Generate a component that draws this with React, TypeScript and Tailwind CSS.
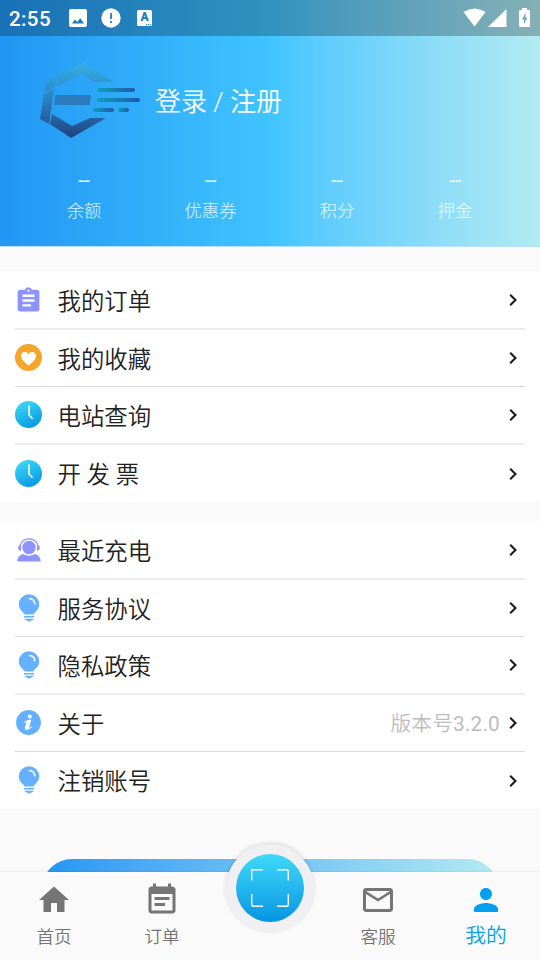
import React from 'react';

function Clipboard() {
  return (
    <svg viewBox="0 0 24 24" className="mt-px h-[29px] w-[29px] flex-none" fill="#8c93fc">
      <path d="M19 3h-4.18C14.4 1.84 13.3 1 12 1s-2.400.84-2.820 2H5c-1.100 0-2 .9-2 2v14c0 1.100.9 2 2 2h14c1.100 0 2-.9 2-2V5c0-1.100-.9-2-2-2zm-7 0c.55 0 1 .45 1 1s-.45 1-1 1-1-.45-1-1 .45-1 1-1zm2 14H7v-2h7v2zm3-4H7v-2h10v2zm0-4H7V7h10v2z" />
    </svg>
  );
}

function Heart() {
  return (
    <svg viewBox="0 0 27 27" className="-mt-px h-[27px] w-[27px]">
      <circle cx="13.5" cy="13.5" r="13.5" fill="#f5a42c" />
      <path d="M13.500 21.500C9 18 6 15.200 6 11.800C6 9.500 7.700 8 9.800 8C11.400 8 12.800 8.900 13.500 10.300C14.200 8.900 15.600 8 17.200 8C19.300 8 21 9.500 21 11.800C21 15.200 18 18 13.500 21.500Z" fill="#fff" />
    </svg>
  );
}

function Clock() {
  return (
    <svg viewBox="0 0 27 27" className="-mt-px h-[27px] w-[27px]">
      <defs>
        <linearGradient id="clockFill" x1="0.25" y1="0" x2="0.7" y2="1">
          <stop offset="0" stopColor="#3dd9f8" />
          <stop offset="1" stopColor="#0697e2" />
        </linearGradient>
      </defs>
      <circle cx="13.5" cy="13.5" r="13.5" fill="url(#clockFill)" />
      <path d="M14 4.500V14L17.600 17.800" fill="none" stroke="#fff" strokeWidth="1.600" />
    </svg>
  );
}

function Headset() {
  return (
    <svg viewBox="0 0 24 25" className="h-[25px] w-6" fill="#8c93fc">
      <circle cx="12" cy="10.500" r="6.700" />
      <path d="M3 9.500C4 4.500 7.300 1.800 12 1.800S20 4.500 21 9.500" fill="none" stroke="#8c93fc" strokeWidth="1.200" />
      <path d="M4 7.500C.3 8.500.3 13.300 4 14ZM20 7.500C23.700 8.500 23.700 13.300 20 14Z" />
      <path d="M.3 24.500C.4 20 3.200 17.600 6.400 17C9.500 19.200 14.500 19.200 17.600 17C20.800 17.600 23.600 20 23.700 24.500Z" />
    </svg>
  );
}

function Bulb() {
  return (
    <svg viewBox="0 0 22 28" className="-mt-px h-7 w-[22px]" fill="#66b1ff">
      <path d="M11 .3A10.200 10.200 0 0 0 .8 10.500C.8 14.800 4 17.300 5.600 19Q6.200 20.500 7.400 20.500H14.600Q15.800 20.500 16.400 19C18 17.300 21.200 14.800 21.200 10.500A10.200 10.200 0 0 0 11 .3Z" />
      <path d="M11.500 4.500Q16.300 4.800 16.800 9.800" fill="none" stroke="#fff" strokeWidth="1.500" strokeLinecap="round" />
      <path d="M6 22H16V23.500H6ZM6 24.700H16Q14.800 26.200 13.500 26.300Q12.500 27.500 11 27.500T8.500 26.300Q7 26 6 24.700Z" />
    </svg>
  );
}

function Info() {
  return (
    <svg viewBox="0 0 25 25" className="-mt-px h-[25px] w-[25px]">
      <circle cx="12.500" cy="12.500" r="12.400" fill="#66b1ff" />
      <circle cx="13.800" cy="6.500" r="1.900" fill="#fff" />
      <path d="M8.500 11.600Q11.500 10.300 13.300 9.800H15.300L13 17.400Q13 18.200 15.300 16.200L15.900 16.900Q12.500 20.500 9.900 20Q8.400 19.500 8.900 17.700L10.400 12.500L8.300 12.600Z" fill="#fff" />
    </svg>
  );
}

function Chevron() {
  return (
    <svg viewBox="0 0 12 16" className="h-4 w-3" fill="none" stroke="#1c1c1c" strokeWidth="2.100">
      <path d="M3.200 2.700L8.500 8L3.200 13.300" />
    </svg>
  );
}

function Logo() {
  return (
    <svg viewBox="0 0 100 78" className="h-[78px] w-[100px]">
      <defs>
        <linearGradient id="frame" gradientUnits="userSpaceOnUse" x1="0" y1="0" x2="0" y2="77">
          <stop offset="0" stopColor="#35b0e6" />
          <stop offset="0.5" stopColor="#2b7fbe" />
          <stop offset="1" stopColor="#20417f" />
        </linearGradient>
        <linearGradient id="speed">
          <stop offset="0" stopColor="#0ba3b5" />
          <stop offset="1" stopColor="#2455ad" />
        </linearGradient>
      </defs>
      <g fill="url(#frame)">
        <path d="M19 12L44 0L73 20H54L41 12L17 24Z" />
        <path d="M6 21L17 13L14 25.500L4 30.500Z" />
        <path d="M4 32L14 27L9 62L0 57Z" />
        <path d="M12 52L32 64L50 56H66L31 76L10 62Z" />
      </g>
      <path d="M15.500 33H51L49.500 43H14Z" fill="#2b7cbf" />
      <g fill="url(#speed)">
        <rect x="57" y="26" width="38" height="4" rx="2" />
        <rect x="57" y="36" width="43" height="4" rx="2" />
        <rect x="53" y="46" width="21" height="4" rx="2" />
        <rect x="78" y="46" width="11" height="4" rx="2" />
      </g>
    </svg>
  );
}

type RowProps = {
  icon: React.ReactNode;
  label: string;
  note?: React.ReactNode;
  line: 'thick' | 'thin' | 'none';
  first?: boolean;
  h?: string;
};

const rowLine = {
  thick: 'border-b-2 border-[#ececec]',
  thin: 'border-b border-[#dadada]',
  none: '',
};

function Row({ icon, label, note, line, first = false, h = 'h-[57px]' }: RowProps) {
  return (
    <div className={`flex items-center ${h} ${rowLine[line]}`}>
      <div className="flex w-[27px] items-center justify-center">{icon}</div>
      <div
        className={`ml-[15.500px] flex-1 text-[23.400px] leading-[34px] whitespace-pre text-[#212121] ${first ? 'pt-[5px]' : 'pt-[3px]'}`}
      >
        {label}
      </div>
      {note && <div className="mr-[7px] pt-[2px] text-[20.800px] leading-[30px] text-[#bdbdbd]">{note}</div>}
      <div className="mr-1.5">
        <Chevron />
      </div>
    </div>
  );
}

function Stat({ label, className }: { label: string; className: string }) {
  return (
    <div className={`flex flex-col items-center ${className}`}>
      <div className="text-[21px] leading-6 font-normal text-white">--</div>
      <div className="mt-1.5 text-[17.300px] leading-[26px] whitespace-nowrap text-white/70">{label}</div>
    </div>
  );
}

function Tab({ label, path, active = false }: { label: string; path: string; active?: boolean }) {
  return (
    <div className={`flex w-[108px] flex-col items-center ${active ? 'text-[#03a0f0]' : 'text-[#757575]'}`}>
      <svg viewBox="0 0 24 24" className="mt-[10px] h-9 w-9" fill="currentColor">
        <path d={path} />
      </svg>
      <div className={active ? 'mt-[5px] text-[20.800px] leading-[26px]' : 'mt-[6px] text-[17.600px] leading-[26px]'}>
        {label}
      </div>
    </div>
  );
}

function StatusBar() {
  return (
    <div className="flex h-9 items-center bg-black/25 text-white">
      <div className="ml-[9px] w-[60px] pt-[2px] text-[20.500px] leading-6 font-medium tracking-[0.400px]">2:55</div>
      <svg viewBox="0 0 18 18" className="h-[18px] w-[18px]" fill="#fff">
        <path fillRule="evenodd" d="M2 0H16Q18 0 18 2V16Q18 18 16 18H2Q0 18 0 16V2Q0 0 2 0ZM3 14.500H15L11.200 9.200L8.200 13L6 10.500Z" />
      </svg>
      <svg viewBox="0 0 20 20" className="ml-[14px] h-5 w-5">
        <circle cx="10" cy="10" r="9.700" fill="#fff" />
        <path d="M9 5H11V11H9ZM9 13H11V15H9Z" fill="#3788bd" />
      </svg>
      <div className="ml-[16px] flex h-4 w-[15px] flex-col items-center rounded-[1.500px] bg-white text-[12px] leading-[13px] font-black text-[#267db7]">
        <span className="pt-px">A</span>
        <div className="ml-[7px] flex gap-px">
          <i className="h-px w-px bg-[#267db7]" />
          <i className="h-px w-px bg-[#267db7]" />
          <i className="h-px w-px bg-[#267db7]" />
        </div>
      </div>
      <svg viewBox="0 0 24 20" className="ml-auto h-5 w-6" fill="#fff">
        <path d="M.5 4Q11.500-3 22.500 4L11.500 18.500Z" />
      </svg>
      <svg viewBox="0 0 19 19" className="ml-[1px] h-[19px] w-[19px]" fill="#fff">
        <path d="M18.500 0V18H0Z" />
      </svg>
      <svg viewBox="0 0 11 20" className="mr-[10px] ml-[12px] h-5 w-[11px]">
        <path d="M3 0H8V2H10Q11 2 11 3V18Q11 19 10 19H1Q0 19 0 18V3Q0 2 1 2H3Z" fill="#fff" />
        <path d="M6.500 4.500L3 11.500H5V16.500L8.300 9.500H6.500Z" fill="#7caab4" />
      </svg>
    </div>
  );
}

export default function App() {
  return (
    <div className="relative flex h-[960px] w-[540px] flex-col overflow-hidden bg-[#fafafa] font-[Roboto,'Noto_Sans_CJK_SC',sans-serif] font-[350]">
      <header className="flex h-[246px] flex-none flex-col bg-linear-to-r from-[#2196f3] via-[#40c4ff] to-[#b2ebf2] shadow-[0_1px_0_#b9e2fa]">
        <StatusBar />
        <div className="mt-[25px] flex h-[80px] items-center pl-10">
          <Logo />
          <div className="ml-[15px] pt-[2px] text-[26px] leading-9 text-white">登录 / 注册</div>
        </div>
        <div className="mt-[27px] flex pl-[66px]">
          <Stat label="余额" className="w-9" />
          <Stat label="优惠券" className="ml-[82px] w-[53px]" />
          <Stat label="积分" className="ml-[82px] w-9" />
          <Stat label="押金" className="ml-[82px] w-9" />
        </div>
      </header>

      <section className="mt-[25px] flex-none bg-white px-[15px]">
        <Row icon={<Clipboard />} label="我的订单" line="thick" h="h-[59px]" first />
        <Row icon={<Heart />} label="我的收藏" line="thin" />
        <Row icon={<Clock />} label="电站查询" line="thick" h="h-[58px]" />
        <Row icon={<Clock />} label="开 发 票" line="none" />
      </section>

      <section className="mt-[19px] flex-none bg-white px-[15px]">
        <Row icon={<Headset />} label="最近充电" line="thick" h="h-[59px]" first />
        <Row icon={<Bulb />} label="服务协议" line="thin" />
        <Row icon={<Bulb />} label="隐私政策" line="thick" h="h-[58px]" />
        <Row
          icon={<Info />}
          label="关于"
          note={
            <>
              版本号<span className="font-normal tracking-[0.200px]">3.2.0</span>
            </>
          }
          line="thin"
        />
        <Row icon={<Bulb />} label="注销账号" line="none" />
      </section>

      <div className="mx-[42px] mt-[50px] h-[13px] flex-none overflow-hidden">
        <div className="h-[60px] rounded-[30px] bg-linear-to-r from-[#2196f3] to-[#b2ebf2]" />
      </div>
      <nav className="z-10 flex h-[88px] flex-none bg-[#fafafa] shadow-[0_-1px_2px_rgba(0,0,0,0.060)]">
        <Tab label="首页" path="M10 20v-6h4v6h5v-8h3L12 3 2 12h3v8z" />
        <Tab
          label="订单"
          path="M17 10H7v2h10v-2zm2-7h-1V1h-2v2H8V1H6v2H5c-1.110 0-1.990.9-1.990 2L3 19c0 1.100.89 2 2 2h14c1.100 0 2-.9 2-2V5c0-1.100-.9-2-2-2zm0 16H5V8h14v11zm-5-5H7v2h7v-2z"
        />
        <div className="w-[108px]" />
        <Tab
          label="客服"
          path="M22 6c0-1.100-.9-2-2-2H4c-1.100 0-2 .9-2 2v12c0 1.100.9 2 2 2h16c1.100 0 2-.9 2-2V6zm-2 0l-8 5-8-5h16zm0 12H4V8l8 5 8-5v10z"
        />
        <Tab
          label="我的"
          active
          path="M12 12c2.210 0 4-1.790 4-4s-1.790-4-4-4-4 1.790-4 4 1.790 4 4 4zm0 2c-2.670 0-8 1.340-8 4v2h16v-2c0-2.660-5.330-4-8-4z"
        />
      </nav>
      <div className="absolute top-[844px] left-[226px] z-20 flex h-[88px] w-[88px] items-center justify-center rounded-full bg-[#f0f0f3] shadow-[0_-1px_4px_rgba(0,0,0,0.140)]">
        <div className="flex h-[68px] w-[68px] items-center justify-center rounded-full bg-linear-to-b from-[#3fd9f8] to-[#0395e2]">
          <svg viewBox="0 0 38 38" className="h-[38px] w-[38px]" fill="none" stroke="#fff" strokeWidth="1.400">
            <path d="M.7 11.500V.7H12M26 .7H35.500Q37.300.7 37.300 2.500V11.500M37.300 25V35.500Q37.300 37.300 35.500 37.300H26M12 37.300H2.500Q.7 37.300.7 35.500V25" />
          </svg>
        </div>
      </div>
    </div>
  );
}
